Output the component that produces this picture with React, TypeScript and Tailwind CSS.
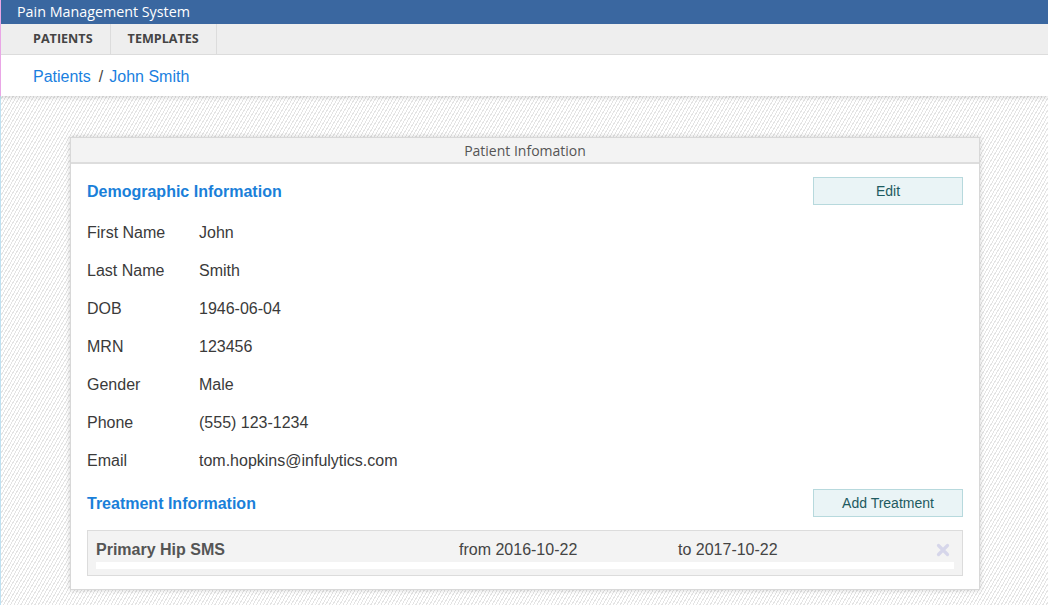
import React from "react";

const rows: [string, string][] = [
  ["First Name", "John"],
  ["Last Name", "Smith"],
  ["DOB", "1946-06-04"],
  ["MRN", "123456"],
  ["Gender", "Male"],
  ["Phone", "(555) 123-1234"],
  ["Email", "tom.hopkins@infulytics.com"],
];

export default function App() {
  return (
    <div className="min-h-[605px] flex flex-col font-['Liberation_Sans',Arial,sans-serif] bg-[repeating-linear-gradient(120deg,#ffffff_0px,#ffffff_2px,#e4e4e4_2px,#e4e4e4_3px)]">
      <div className="relative z-10 border-l border-[#e9a6e6] bg-white shadow-[0_2px_4px_rgba(0,0,0,0.12)]">
        <div className="h-[24px] bg-[#3a67a0] pl-[16px] flex items-center text-white text-[14.3px] font-['Open_Sans',sans-serif]">
          Pain Management System
        </div>
        <div className="h-[31px] bg-[#eeeeee] border-b border-[#dcdcdc] pl-[15px] flex">
          <div className="px-[17px] flex items-center border-r border-[#dcdcdc] text-[12.6px] font-bold text-[#444] font-['Open_Sans',sans-serif]">
            PATIENTS
          </div>
          <div className="px-[17px] flex items-center border-r border-[#dcdcdc] text-[12.6px] font-bold text-[#444] font-['Open_Sans',sans-serif]">
            TEMPLATES
          </div>
        </div>
        <div className="h-[41px] pl-[32px] pt-[2px] flex items-center text-[16px]">
          <span className="text-[#1a7fe0]">Patients</span>
          <span className="ml-[8px] text-[#444]">/</span>
          <span className="ml-[6px] text-[#1a7fe0]">John Smith</span>
        </div>
      </div>
      <div className="flex-1 border-l border-[#bfe1f2] pt-[41px] pb-[16px]">
        <div className="w-[910px] ml-[69px] bg-white border border-[#d8d8d8] shadow-[0_0_5px_rgba(0,0,0,0.18)]">
          <div className="h-[26px] bg-[#f3f3f3] border-b-2 border-[#dddddd] flex items-center justify-center text-[14px] text-[#555] font-['Open_Sans',sans-serif]">
            Patient Infomation
          </div>
          <div className="px-[16px] pt-[13px] pb-[13px]">
            <div className="flex items-center justify-between h-[28px]">
              <div className="text-[16px] font-bold text-[#1a7fd9] translate-y-[1px]">Demographic Information</div>
              <button className="w-[150px] h-[28px] bg-[#eaf4f6] border border-[#b7d9dd] text-[#1e5a60] text-[14px]">
                Edit
              </button>
            </div>
            <div className="mt-[9px] flex flex-col">
              {rows.map(([k, v]) => (
                <div key={k} className="h-[38px] flex items-center text-[16px] text-[#3a3a3a]">
                  <div className="w-[112px]">{k}</div>
                  <div>{v}</div>
                </div>
              ))}
            </div>
            <div className="mt-[9px] flex items-center justify-between h-[28px]">
              <div className="text-[16px] font-bold text-[#1a7fd9] translate-y-[1px]">Treatment Information</div>
              <button className="w-[150px] h-[28px] bg-[#eaf4f6] border border-[#b7d9dd] text-[#1e5a60] text-[14px]">
                Add Treatment
              </button>
            </div>
            <div className="mt-[13px] bg-[#f3f3f3] border border-[#dcdcdc] px-[8px] pt-[8px] pb-[6px]">
              <div className="flex items-center h-[22px] text-[16px] text-[#444]">
                <div className="w-[363px] font-bold text-[#555]">Primary Hip SMS</div>
                <div className="w-[219px]">from 2016-10-22</div>
                <div className="flex-1">to 2017-10-22</div>
                <svg width="14" height="14" viewBox="0 0 14 14" className="mr-[4px]">
                  <path d="M2.5 2.5 L11.5 11.5 M11.5 2.5 L2.5 11.5" stroke="#d6d6ea" strokeWidth="3.2" strokeLinecap="round" />
                </svg>
              </div>
              <div className="mt-[1px] h-[7px] bg-white" />
            </div>
          </div>
        </div>
      </div>
    </div>
  );
}
